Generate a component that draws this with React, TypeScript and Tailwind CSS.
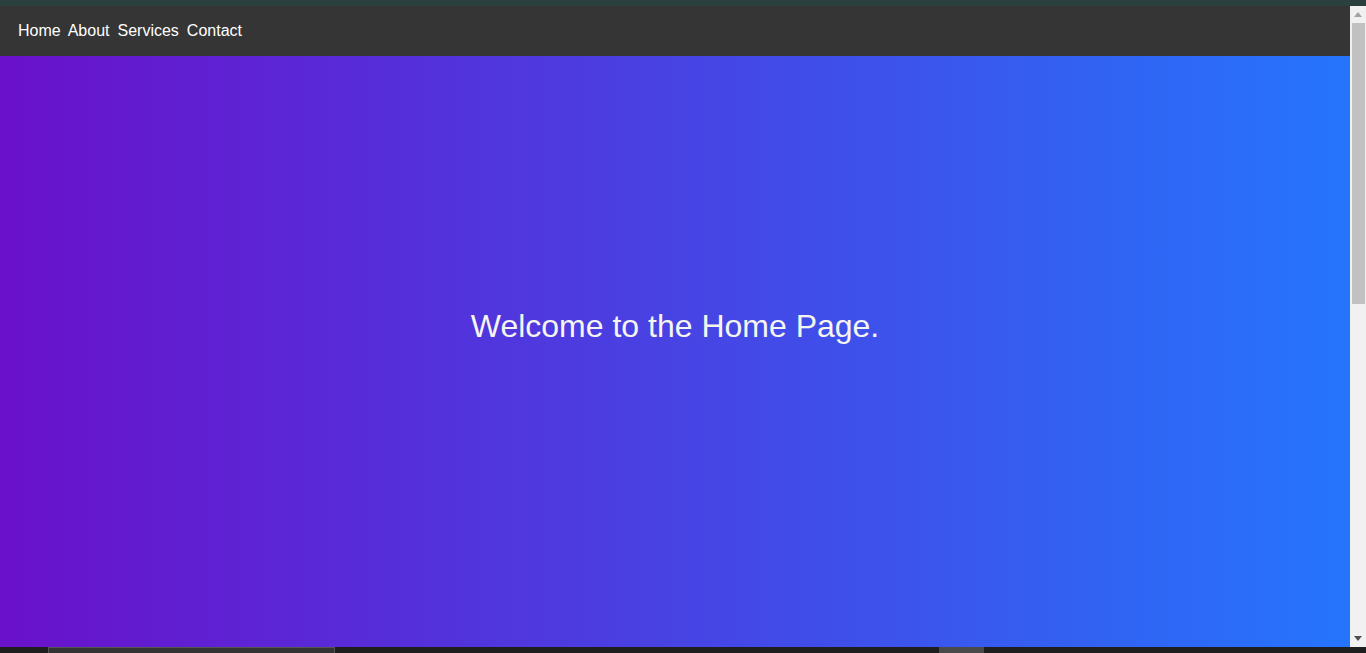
export default function App() {
  return (
    <div className="h-[653px] w-[1366px] flex flex-col overflow-hidden bg-[#1e1e1e]" style={{ fontFamily: '"Liberation Sans", Arial, sans-serif' }}>
      <div className="h-[6px] bg-[#2a403d]" />
      <div className="flex h-[641px]">
        <div className="flex-1 flex flex-col">
          <nav className="h-[50px] bg-[#353535] flex items-center pl-[18px] text-[16px] text-white">
            <a>Home</a>
            <a className="ml-[7px]">About</a>
            <a className="ml-[8px]">Services</a>
            <a className="ml-[8px]">Contact</a>
          </nav>
          <main className="flex-1 bg-[linear-gradient(to_right,#6a11cb,#2575fc)] flex items-center justify-center pb-[52px]">
            <h1 className="text-[32px] text-[#f5f5f0]">Welcome to the Home Page.</h1>
          </main>
        </div>
        <div className="w-[16px] bg-[#f1f1f1] flex flex-col items-center">
          <div className="h-[17px] flex items-center justify-center">
            <svg width="8" height="5" viewBox="0 0 8 5"><path d="M4 0 L8 5 L0 5 Z" fill="#a3a3a3" /></svg>
          </div>
          <div className="w-[13px] h-[281px] bg-[#c1c1c1]" />
          <div className="flex-1" />
          <div className="h-[17px] flex items-center justify-center">
            <svg width="8" height="5" viewBox="0 0 8 5"><path d="M0 0 L8 0 L4 5 Z" fill="#505050" /></svg>
          </div>
        </div>
      </div>
      <div className="h-[6px] flex bg-[#1e1e1e]">
        <div className="ml-[48px] w-[287px] h-full bg-[#333] border-t border-x border-[#555]" />
        <div className="ml-[604px] w-[45px] h-full bg-[#4a4a4a]" />
      </div>
    </div>
  );
}
